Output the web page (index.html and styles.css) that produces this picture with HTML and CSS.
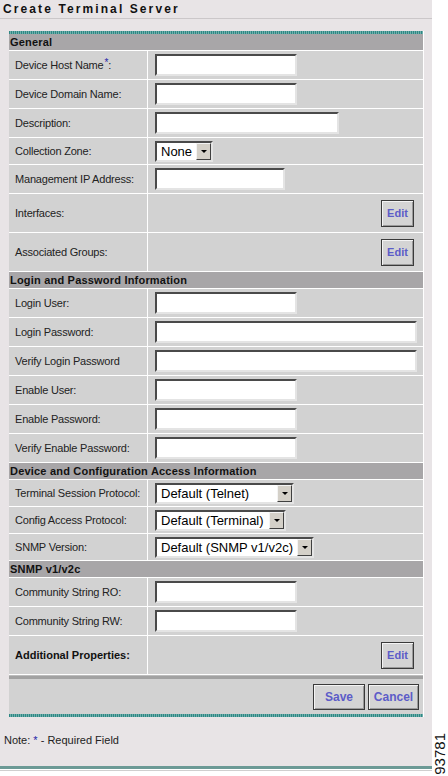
FILE: index.html
```html
<!DOCTYPE html>
<html lang="en">

<head>
    <meta charset="UTF-8">
    <meta name="viewport" content="width=device-width, initial-scale=1.0">
    <title>Create Terminal Server</title>
    <link rel="stylesheet" href="styles.css">
</head>

<body>
    <div class="page">
        <div class="col">
            <div class="main">
                <h1 class="title">Create Terminal Server</h1>

                <form class="panel">
                    <div class="teal"></div>

                    <div class="head">General</div>
                    <div class="row">
                        <div class="label">Device Host Name<sup class="req">*</sup>:</div>
                        <div class="value"><input class="txt w-short" type="text"></div>
                    </div>
                    <div class="row">
                        <div class="label">Device Domain Name:</div>
                        <div class="value"><input class="txt w-short" type="text"></div>
                    </div>
                    <div class="row">
                        <div class="label">Description:</div>
                        <div class="value"><input class="txt w-desc" type="text"></div>
                    </div>
                    <div class="row row-sel">
                        <div class="label">Collection Zone:</div>
                        <div class="value">
                            <div class="select s-none"><span class="select-text">None</span><span class="select-btn"></span></div>
                        </div>
                    </div>
                    <div class="row">
                        <div class="label">Management IP Address:</div>
                        <div class="value"><input class="txt w-ip" type="text"></div>
                    </div>
                    <div class="row row-edit">
                        <div class="label">Interfaces:</div>
                        <div class="value value-edit"><button type="button" class="btn btn-edit">Edit</button></div>
                    </div>
                    <div class="row row-edit">
                        <div class="label">Associated Groups:</div>
                        <div class="value value-edit"><button type="button" class="btn btn-edit">Edit</button></div>
                    </div>

                    <div class="head">Login and Password Information</div>
                    <div class="row">
                        <div class="label">Login User:</div>
                        <div class="value"><input class="txt w-short" type="text"></div>
                    </div>
                    <div class="row">
                        <div class="label">Login Password:</div>
                        <div class="value"><input class="txt w-long" type="password"></div>
                    </div>
                    <div class="row">
                        <div class="label">Verify Login Password</div>
                        <div class="value"><input class="txt w-long" type="password"></div>
                    </div>
                    <div class="row">
                        <div class="label">Enable User:</div>
                        <div class="value"><input class="txt w-short" type="text"></div>
                    </div>
                    <div class="row">
                        <div class="label">Enable Password:</div>
                        <div class="value"><input class="txt w-short" type="password"></div>
                    </div>
                    <div class="row">
                        <div class="label">Verify Enable Password:</div>
                        <div class="value"><input class="txt w-short" type="password"></div>
                    </div>

                    <div class="head">Device and Configuration Access Information</div>
                    <div class="row row-sel">
                        <div class="label">Terminal Session Protocol:</div>
                        <div class="value">
                            <div class="select s-telnet"><span class="select-text">Default (Telnet)</span><span class="select-btn"></span></div>
                        </div>
                    </div>
                    <div class="row row-sel">
                        <div class="label">Config Access Protocol:</div>
                        <div class="value">
                            <div class="select s-term"><span class="select-text">Default (Terminal)</span><span class="select-btn"></span></div>
                        </div>
                    </div>
                    <div class="row row-sel">
                        <div class="label">SNMP Version:</div>
                        <div class="value">
                            <div class="select s-snmp"><span class="select-text">Default (SNMP v1/v2c)</span><span class="select-btn"></span></div>
                        </div>
                    </div>

                    <div class="head">SNMP v1/v2c</div>
                    <div class="row">
                        <div class="label">Community String RO:</div>
                        <div class="value"><input class="txt w-short" type="text"></div>
                    </div>
                    <div class="row">
                        <div class="label">Community String RW:</div>
                        <div class="value"><input class="txt w-short" type="text"></div>
                    </div>
                    <div class="row row-edit">
                        <div class="label label-bold">Additional Properties:</div>
                        <div class="value value-edit"><button type="button" class="btn btn-edit">Edit</button></div>
                    </div>

                    <div class="sep"></div>
                    <div class="actions">
                        <button type="button" class="btn btn-save">Save</button>
                        <button type="button" class="btn btn-cancel">Cancel</button>
                    </div>
                    <div class="teal"></div>
                </form>

                <p class="note">Note: <span class="req">*</span> - Required Field</p>

                <div class="foot"></div>
            </div>
            <div class="foot-rule"></div>
        </div>

        <div class="side">
            <span class="fig">93781</span>
        </div>
    </div>
</body>

</html>
```

FILE: styles.css
```css
body {
    margin: 0;
    font-family: "Liberation Sans", Arial, sans-serif;
    font-size: 11px;
    color: #1a1a1a;
    background: #fff;
}

.page {
    display: flex;
    height: 776px;
}

.col {
    width: 432px;
}

.main {
    background: #e8e4e6;
    overflow: hidden;
}

.title {
    margin: 0;
    height: 19px;
    box-sizing: border-box;
    padding: 2px 3px 0;
    font-size: 12px;
    line-height: 14px;
    font-weight: bold;
    letter-spacing: 2.1px;
    color: #111;
    border-bottom: 1px solid #cbc7c9;
}

.panel {
    width: 415px;
    margin: 12px 0 0 9px;
    border-right: 1px solid #fff;
    box-sizing: border-box;
}

.teal {
    height: 3px;
    background: repeating-linear-gradient(90deg, #2e8784 0 1px, #6fb0ac 1px 2px);
}

.head {
    height: 16px;
    line-height: 16px;
    padding-left: 1px;
    background: #a8a6a8;
    font-weight: bold;
    letter-spacing: 0.2px;
    color: #111;
    border-bottom: 1px solid #fff;
}

.row {
    display: flex;
    height: 28px;
    background: #d2d2d2;
    border-bottom: 1px solid #fff;
}

.row-sel {
    height: 26px;
}

.row-edit {
    height: 38px;
}

.label {
    width: 139px;
    flex-shrink: 0;
    box-sizing: border-box;
    padding-left: 6px;
    display: flex;
    align-items: center;
    border-right: 1px solid #fff;
    letter-spacing: -0.2px;
    color: #222;
}

.label-bold {
    font-weight: bold;
    letter-spacing: 0;
    color: #111;
}

.req {
    color: #2424a8;
    font-size: 11px;
}

.label .req {
    font-size: 10px;
    position: relative;
    top: -3px;
    margin-left: 1px;
}

.value {
    flex: 1;
    display: flex;
    align-items: center;
    padding-left: 7px;
}

.value-edit {
    justify-content: flex-end;
    padding-right: 9px;
}

/* text boxes */
.txt {
    height: 22px;
    box-sizing: border-box;
    margin: 0;
    padding: 0 3px;
    border: 2px solid;
    border-color: #4a4a4a #e4e4e4 #e4e4e4 #4a4a4a;
    background: #fff;
    font-family: "Liberation Sans", Arial, sans-serif;
    font-size: 13px;
}

.w-short {
    width: 142px;
}

.w-desc {
    width: 184px;
}

.w-ip {
    width: 130px;
}

.w-long {
    width: 262px;
}

/* drop downs */
.select {
    display: inline-flex;
    height: 21px;
    box-sizing: border-box;
    border: 2px solid;
    border-color: #4a4a4a #e4e4e4 #e4e4e4 #4a4a4a;
    background: #fff;
}

.select-text {
    flex: 1;
    padding-left: 4px;
    font-size: 13px;
    line-height: 17px;
    color: #000;
    white-space: nowrap;
}

.select-btn {
    width: 15px;
    box-sizing: border-box;
    background: #d4d0c8;
    border: 1px solid;
    border-color: #f4f4f4 #404040 #404040 #f4f4f4;
    display: flex;
    align-items: center;
    justify-content: center;
}

.select-btn::after {
    content: "";
    border-left: 3px solid transparent;
    border-right: 3px solid transparent;
    border-top: 3px solid #000;
}

.s-none {
    width: 58px;
}

.s-telnet {
    width: 139px;
}

.s-term {
    width: 131px;
}

.s-snmp {
    width: 159px;
}

/* buttons */
.btn {
    margin: 0;
    padding: 0;
    box-sizing: border-box;
    background: #d4d4d4;
    border: 1px solid #3a3a3a;
    box-shadow: inset 1px 1px 0 #f4f4f4, inset -1px -1px 0 #9a9a9a;
    font-family: "Liberation Sans", Arial, sans-serif;
    font-weight: bold;
    font-size: 11px;
    color: #5c5cc8;
}

.btn-edit {
    width: 33px;
    height: 27px;
}

.actions {
    height: 35px;
    background: #d2d2d2;
    display: flex;
    justify-content: flex-end;
    align-items: center;
    gap: 3px;
    padding-right: 4px;
}

.btn-save,
.btn-cancel {
    width: 52px;
    height: 26px;
    font-size: 12px;
}

.btn-cancel {
    width: 51px;
}

.sep {
    height: 3px;
    background: #a2a2a2;
    border-top: 1px solid #bdbdbd;
}

.note {
    margin: 17px 0 0;
    padding-left: 4px;
    line-height: 13px;
    color: #222;
}

.foot {
    height: 3px;
    margin-top: 19px;
    background: #6c9a96;
}

.foot-rule {
    height: 1px;
    margin-top: 1px;
    background: #cfcfcf;
}

.side {
    flex: 1;
    display: flex;
    flex-direction: column;
    justify-content: flex-end;
    align-items: center;
    padding-bottom: 1px;
}

.fig {
    writing-mode: vertical-rl;
    transform: rotate(180deg);
    font-size: 15px;
    line-height: 14px;
    color: #111;
}
```
